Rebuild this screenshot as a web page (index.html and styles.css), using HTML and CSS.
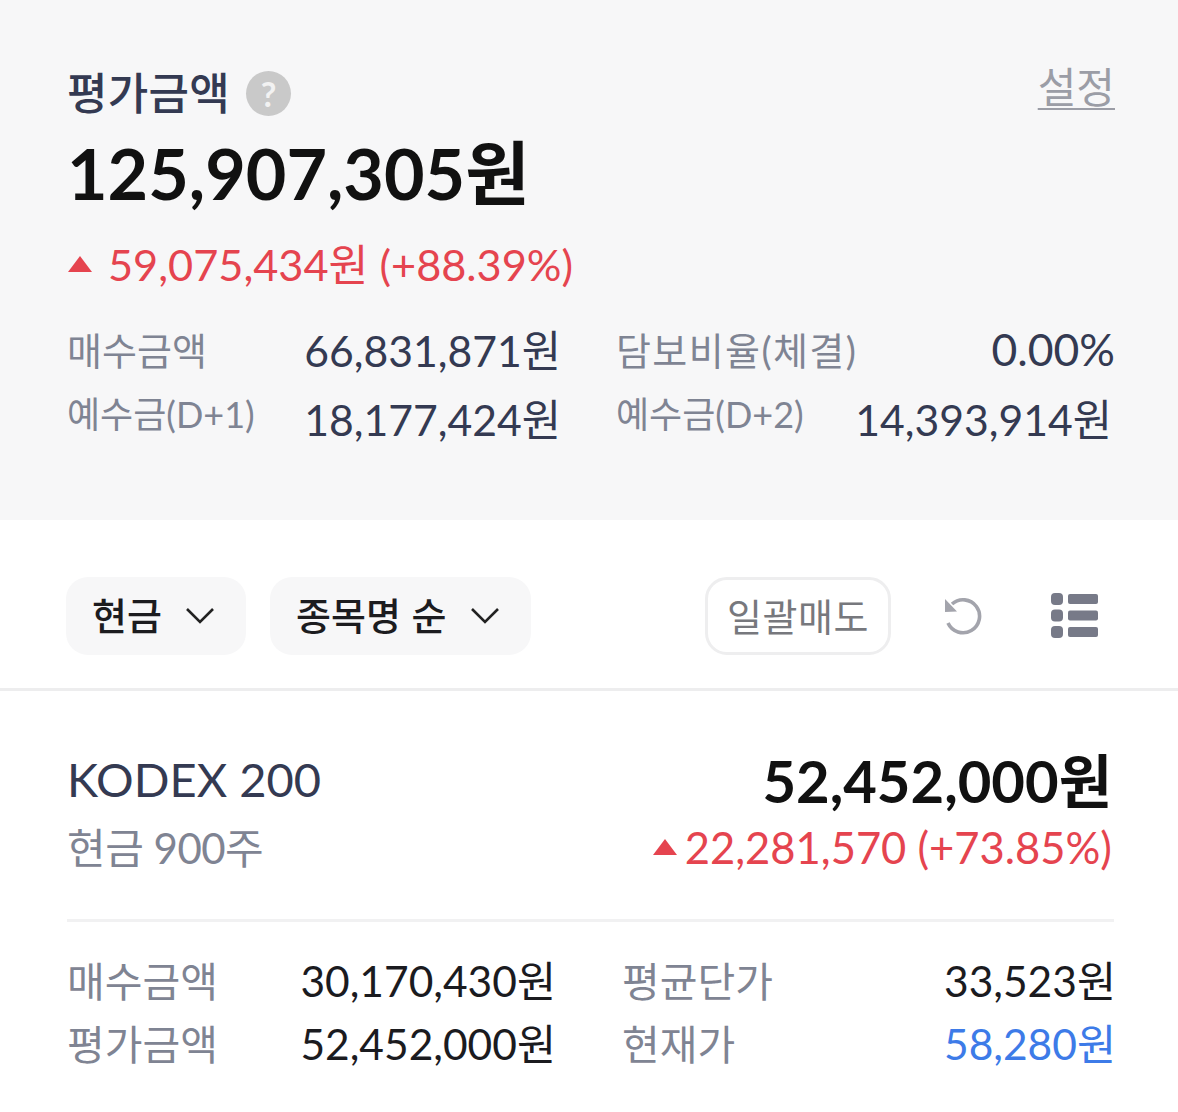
FILE: index.html

```html
<!DOCTYPE html>
<html lang="ko">
<head>
  <meta charset="UTF-8">
  <title>평가금액</title>
  <meta name="viewport" content="width=device-width, initial-scale=1.0">
  <link rel="stylesheet" href="styles.css">
</head>
<body>
  <section class="summary">
    <div class="summary-head">
      <div class="title-row">
        <span class="title">평가금액</span>
        <span class="help">?</span>
      </div>
      <a class="setting">설정</a>
    </div>
    <div class="total">125,907,305원</div>
    <div class="change">
      <svg class="arrow" width="26" height="18" viewBox="0 0 26 18"><path d="M13 1 L25 17 H1 Z" fill="#e5444f"/></svg>
      <span>59,075,434원 (+88.39%)</span>
    </div>
    <div class="stats">
      <div class="stat-line">
        <span class="stat-label">매수금액</span><span class="stat-value">66,831,871원</span>
      </div>
      <div class="stat-line">
        <span class="stat-label stat-wide">담보비율(체결)</span><span class="stat-value stat-pct">0.00%</span>
      </div>
      <div class="stat-line">
        <span class="stat-label stat-small">예수금(D+1)</span><span class="stat-value">18,177,424원</span>
      </div>
      <div class="stat-line">
        <span class="stat-label stat-small">예수금(D+2)</span><span class="stat-value stat-inset">14,393,914원</span>
      </div>
    </div>
  </section>

  <section class="toolbar">
    <button class="select">현금
      <svg width="30" height="18" viewBox="0 0 30 18"><path d="M2 2 L15 15 L28 2" fill="none" stroke="#222" stroke-width="2.6"/></svg>
    </button>
    <button class="select select-sort">종목명 순
      <svg width="30" height="18" viewBox="0 0 30 18"><path d="M2 2 L15 15 L28 2" fill="none" stroke="#222" stroke-width="2.6"/></svg>
    </button>
    <button class="sell">일괄매도</button>
    <svg class="refresh" width="40" height="40" viewBox="0 0 40 40">
      <path d="M9 8 A16.500 16.500 0 1 1 5 27" fill="none" stroke="#a3a4ac" stroke-width="3.600"/>
      <path d="M2 3 L2 16 L14 15.500 Z" fill="#a3a4ac"/>
    </svg>
    <svg class="list" width="47" height="46" viewBox="0 0 47 46">
      <rect x="0" y="0" width="12" height="12" rx="4" fill="#777a88"/>
      <rect x="17" y="1" width="30" height="10" rx="2" fill="#777a88"/>
      <rect x="0" y="16.500" width="12" height="12" rx="4" fill="#777a88"/>
      <rect x="17" y="17.500" width="30" height="10" rx="2" fill="#777a88"/>
      <rect x="0" y="33" width="12" height="12" rx="4" fill="#777a88"/>
      <rect x="17" y="34" width="30" height="10" rx="2" fill="#777a88"/>
    </svg>
  </section>

  <section class="holding">
    <div class="holding-head">
      <div>
        <div class="name">KODEX 200</div>
        <div class="qty">현금 900주</div>
      </div>
      <div class="holding-sum">
        <div class="amount">52,452,000원</div>
        <div class="gain">
          <svg width="26" height="18" viewBox="0 0 26 18"><path d="M13 1 L25 17 H1 Z" fill="#e5444f"/></svg>
          <span>22,281,570 (+73.85%)</span>
        </div>
      </div>
    </div>
    <div class="details">
      <span class="detail-label">매수금액</span><span class="detail-value">30,170,430원</span>
      <span class="detail-label">평균단가</span><span class="detail-value">33,523원</span>
      <span class="detail-label">평가금액</span><span class="detail-value">52,452,000원</span>
      <span class="detail-label">현재가</span><span class="detail-value blue">58,280원</span>
    </div>
  </section>
</body>
</html>
```

FILE: styles.css

```css
* { box-sizing: border-box; }
body { margin: 0; background: #fff; font-family: Lato, "Noto Sans CJK KR", sans-serif; overflow: hidden; }

.summary { height: 520px; background: #f7f7f8; padding: 62px 63px 0 67px; }
.summary-head { display: flex; justify-content: space-between; align-items: flex-start; height: 64px; }
.title-row { display: flex; align-items: center; gap: 16px; padding-top: 4px; }
.title { font-size: 44px; line-height: 54px; font-weight: 500; color: #343a52; letter-spacing: 0.3px; }
.help { width: 45px; height: 45px; border-radius: 50%; background: #c9c9c9; color: #f2f2f2; font-size: 34px; font-weight: 700; text-align: center; line-height: 45px; }
.setting { font-size: 42px; line-height: 50px; color: #9b9da6; text-decoration: underline; text-underline-offset: 5px; text-decoration-thickness: 2px; }
.total { margin-top: 1px; font-size: 70px; line-height: 92px; font-weight: 700; color: #111; }
.change { display: flex; align-items: center; gap: 15px; margin-top: 15px; font-size: 43.300px; line-height: 60px; color: #e5444f; }
.stats { display: grid; grid-template-columns: 494px 499px; column-gap: 55px; row-gap: 5px; margin-top: 22px; }
.stat-line { display: flex; justify-content: space-between; align-items: center; height: 64px; }
.stat-label { font-size: 38px; color: #7f8493; }
.stat-wide { letter-spacing: 1.400px; }
.stat-small { font-size: 36px; margin-bottom: 10px; }
.stat-value { font-size: 42.700px; color: #343a52; }
.stat-pct { font-size: 44.500px; }
.stat-inset { margin-right: 3px; }

.toolbar { display: flex; align-items: center; height: 171px; padding: 24px 80px 0 66px; border-bottom: 3px solid #ededee; }
.select { display: flex; align-items: center; justify-content: space-between; width: 180px; height: 78px; padding: 0 31px 5px 26px; border: 0; border-radius: 22px; background: #f7f7f8; font: 500 38px "Noto Sans CJK KR", sans-serif; color: #1c1c1f; }
.select svg { margin-top: 5px; }
.select-sort { width: 261px; margin-left: 24px; }
.sell { width: 186px; height: 78px; margin-left: auto; padding-bottom: 5px; border: 3px solid #eeeeef; border-radius: 22px; background: #fff; font: 400 38px "Noto Sans CJK KR", sans-serif; color: #77787d; letter-spacing: 0.500px; }
.refresh { margin-left: 52px; }
.list { margin-left: 68px; }

.holding { padding: 56px 62px 0 67px; }
.holding-head { display: flex; justify-content: space-between; margin-right: 2px; padding-bottom: 38px; border-bottom: 3px solid #f1f1f2; }
.name { margin-bottom: 4px; font-size: 47px; line-height: 64px; color: #343a52; }
.qty { font-size: 42px; line-height: 66px; color: #7f8493; letter-spacing: -0.5px; }
.holding-sum { padding-right: 2px; text-align: right; }
.amount { font-size: 58px; line-height: 68px; font-weight: 700; color: #111; }
.gain { display: flex; align-items: center; justify-content: flex-end; gap: 7px; font-size: 43.500px; line-height: 64px; color: #e5444f; }
.details { display: grid; grid-template-columns: 167px 256px 160px 1fr; column-gap: 66px; grid-auto-rows: 63px; align-items: center; padding-top: 25px; }
.detail-label { font-size: 41px; color: #7f8493; white-space: nowrap; }
.detail-value { font-size: 42.500px; color: #1b1b1f; text-align: right; white-space: nowrap; }
.blue { color: #3d7be8; }
```
